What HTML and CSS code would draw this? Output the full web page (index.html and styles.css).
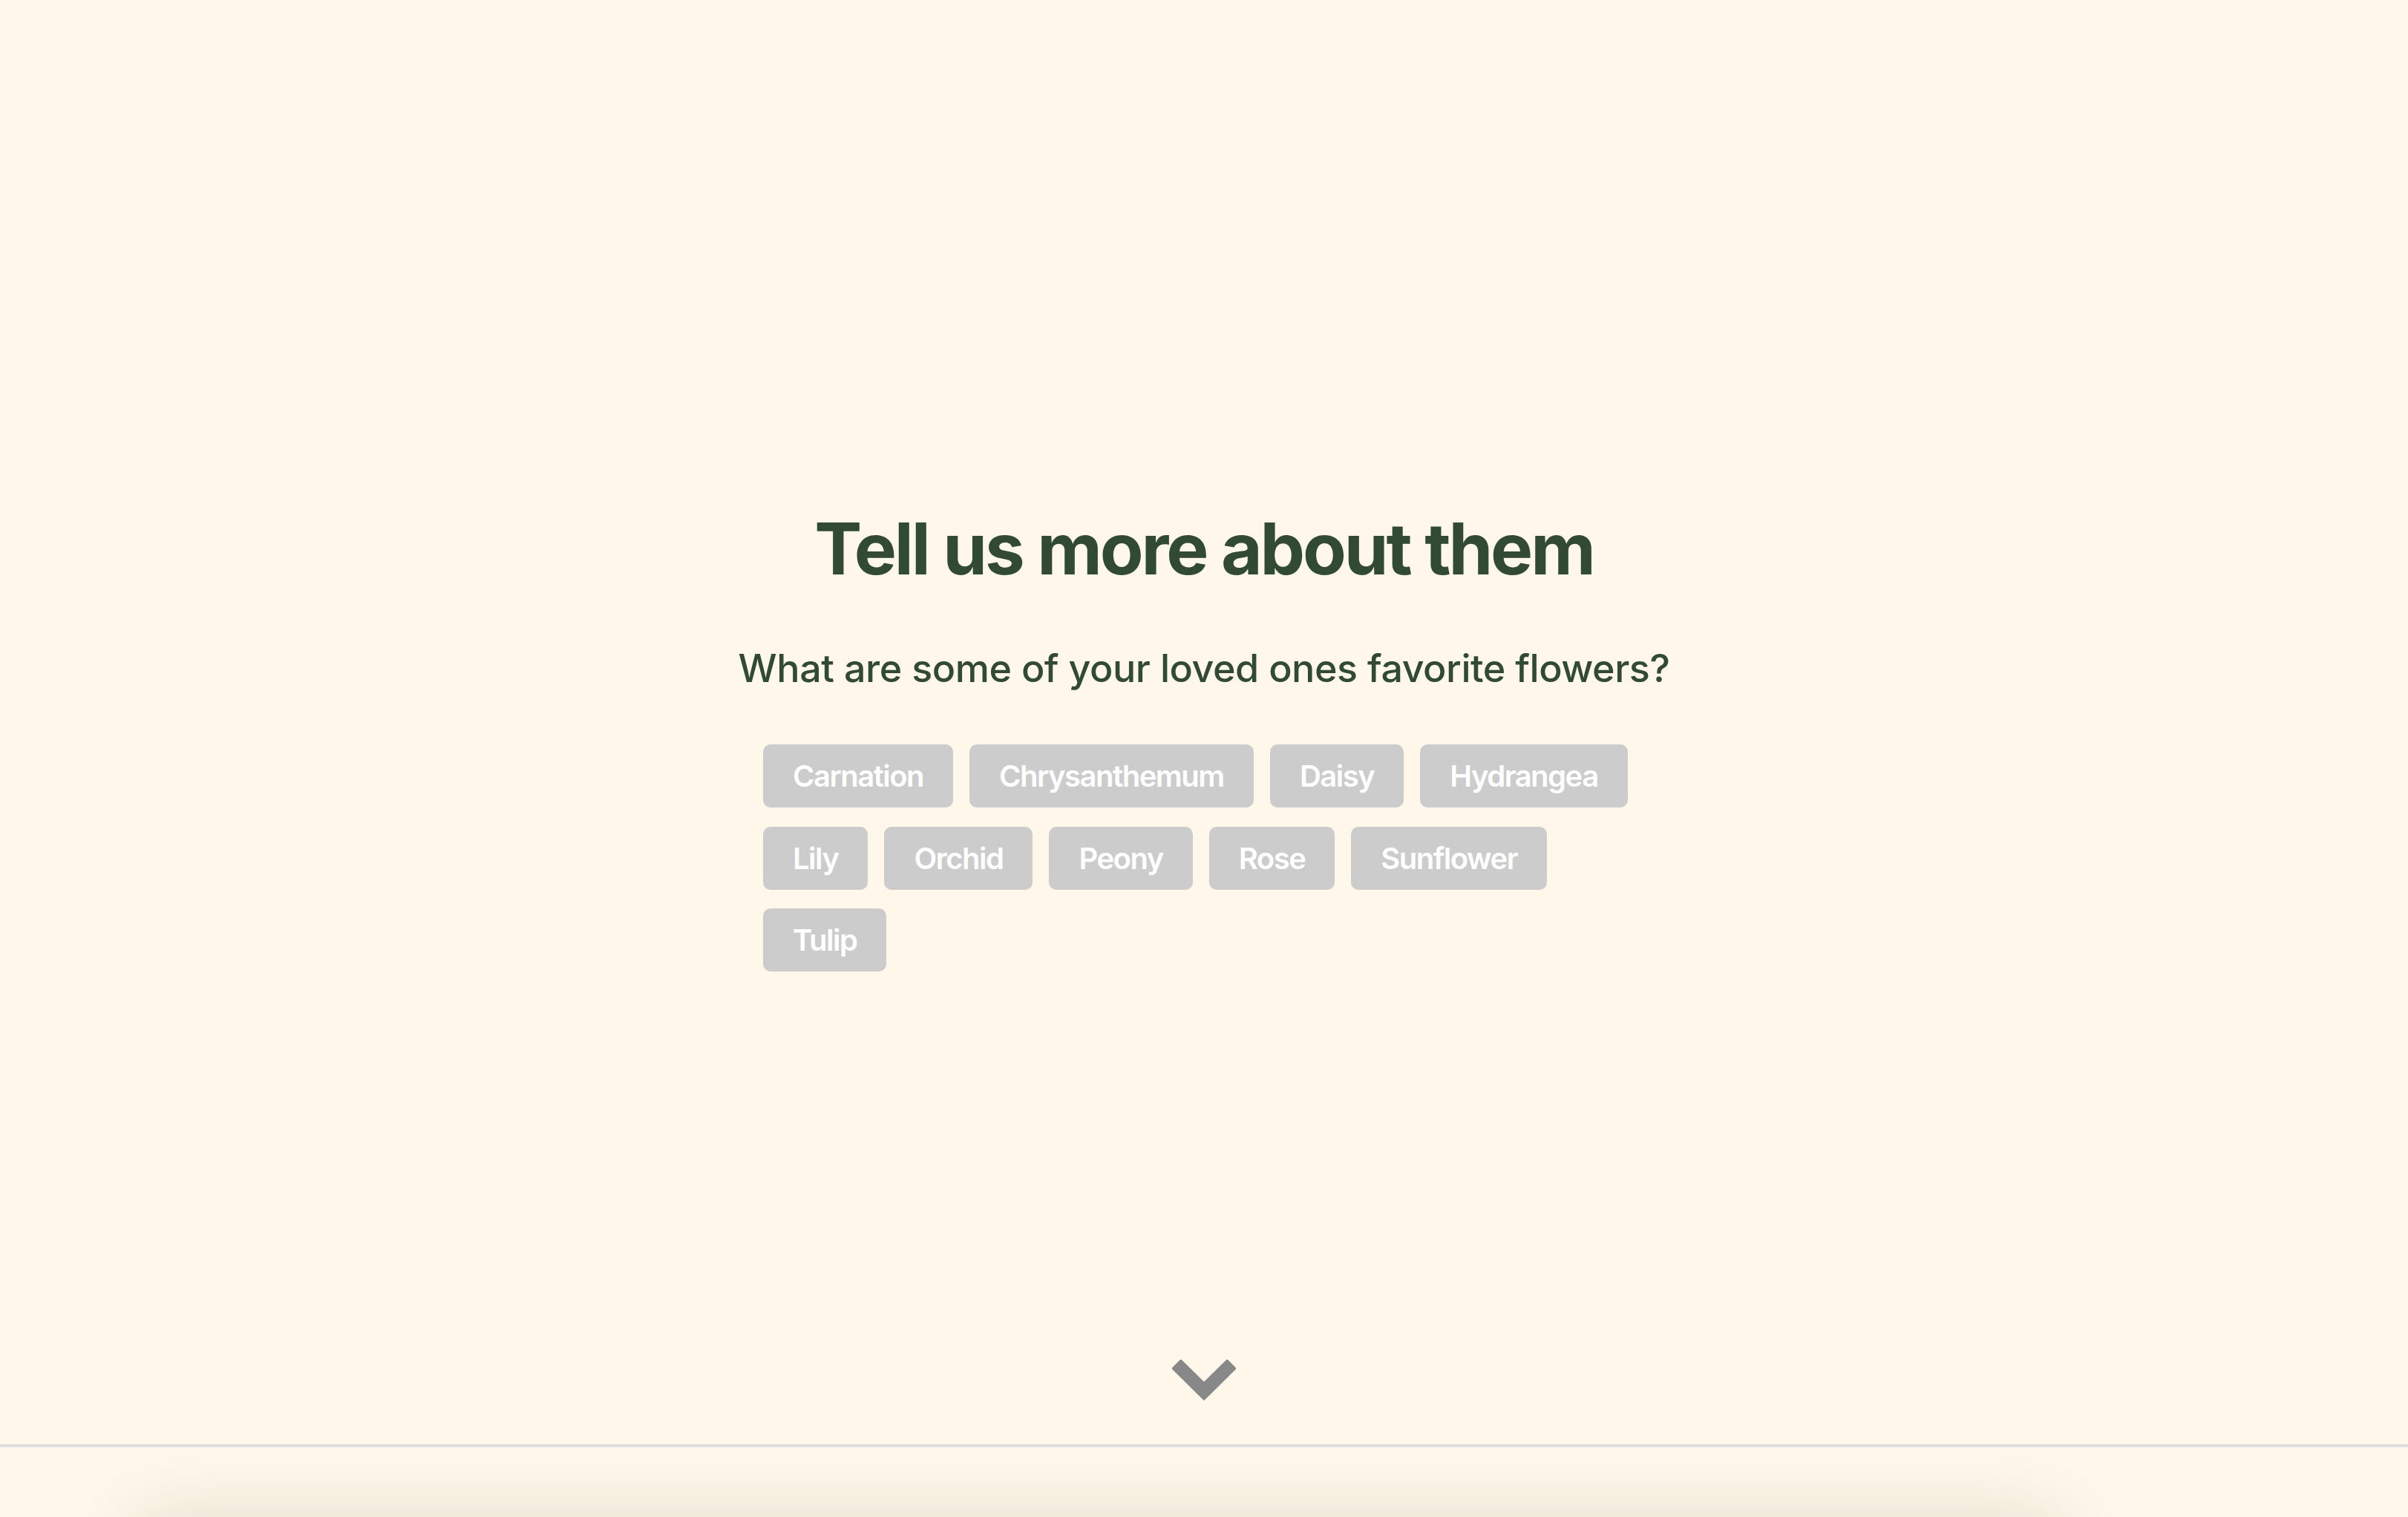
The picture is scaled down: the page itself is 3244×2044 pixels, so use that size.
FILE: index.html
```html
<!DOCTYPE html>
<html lang="en">
<head>
<meta charset="utf-8">
<title>Tell us more about them</title>
<link rel="stylesheet" href="styles.css">
</head>
<body>
<div class="page">
  <section class="screen">
    <div class="question">
      <h1 class="title">Tell us more about them</h1>
      <p class="prompt">What are some of your loved ones favorite flowers?</p>
      <div class="chips">
        <button class="chip">Carnation</button>
        <button class="chip">Chrysanthemum</button>
        <button class="chip">Daisy</button>
        <button class="chip">Hydrangea</button>
        <button class="chip">Lily</button>
        <button class="chip">Orchid</button>
        <button class="chip">Peony</button>
        <button class="chip">Rose</button>
        <button class="chip">Sunflower</button>
        <button class="chip">Tulip</button>
      </div>
    </div>
    <div class="next">
      <svg class="chevron" width="86" height="56" viewBox="0 0 86 56" aria-hidden="true">
        <polyline points="5.5,5.5 43,42.5 80.5,5.5" fill="none" stroke="#888888" stroke-width="18" stroke-linejoin="miter" stroke-linecap="butt"/>
      </svg>
    </div>
  </section>
  <div class="peek">
    <div class="below"></div>
  </div>
</div>
</body>
</html>
```

FILE: styles.css
```css
html, body {
  margin: 0;
  padding: 0;
  height: 2044px;
  overflow: hidden;
  background: #fef7ea;
}

body {
  font-family: Inter, "Noto Sans", "Liberation Sans", sans-serif;
  color: #334a32;
}

.page {
  display: flex;
  flex-direction: column;
}

.screen {
  height: 1946px;
  border-bottom: 4px solid #dddddd;
  display: flex;
  flex-direction: column;
  align-items: center;
}

.question {
  flex: 1;
  display: flex;
  flex-direction: column;
  align-items: center;
  padding-top: 681px;
  box-sizing: border-box;
  width: 100%;
}

.title {
  margin: 0;
  font-size: 96px;
  line-height: 116px;
  font-weight: 700;
  letter-spacing: -3.1px;
  color: #334a32;
}

.prompt {
  margin: 72px 0 0;
  font-size: 52px;
  line-height: 63px;
  font-weight: 500;
  letter-spacing: -0.45px;
  color: #334a32;
}

.chips {
  margin-top: 71px;
  width: 1188px;
  display: flex;
  flex-wrap: wrap;
  column-gap: 22px;
  row-gap: 25.5px;
}

.chip {
  border: none;
  margin: 0;
  background: #cccccc;
  color: #ffffff;
  font-family: Inter, "Noto Sans", "Liberation Sans", sans-serif;
  font-size: 40px;
  font-weight: 600;
  line-height: 45px;
  letter-spacing: -1.5px;
  padding: 20px 40px;
  border-radius: 10px;
  height: 85px;
}

.next {
  padding-bottom: 58px;
  display: flex;
  justify-content: center;
}

.chevron {
  display: block;
}

.peek {
  height: 94px;
  overflow: hidden;
}

.below {
  margin: 100px 474px 0 190px;
  height: 400px;
  background: #fef7ea;
  box-shadow: 0 0 90px rgba(70, 60, 20, 0.15);
}
```
